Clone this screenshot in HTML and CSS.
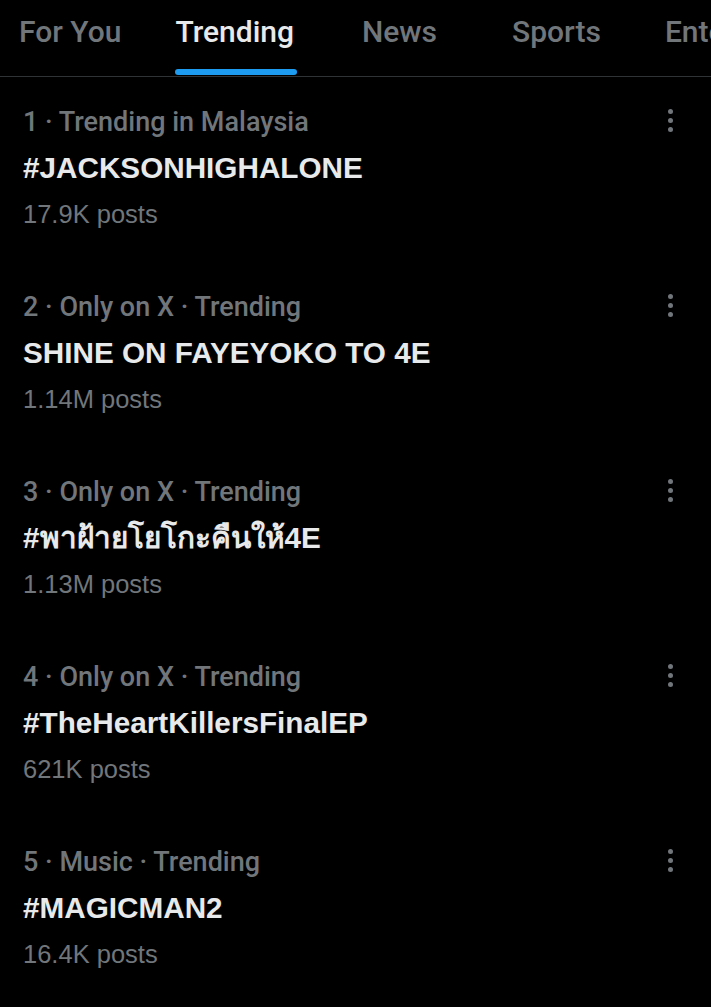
FILE: index.html
```html
<!DOCTYPE html>
<html>
<head>
<meta charset="utf-8">
<link rel="stylesheet" href="styles.css">
</head>
<body>
<div class="tabs">
  <div class="tab tab-foryou">For You</div>
  <div class="tab tab-trending active">Trending<span class="bar"></span></div>
  <div class="tab tab-news">News</div>
  <div class="tab tab-sports">Sports</div>
  <div class="tab tab-ent">Entertainment</div>
</div>
<div class="list">
  <div class="row">
    <div class="meta">1 · Trending in Malaysia</div>
    <div class="title">#JACKSONHIGHALONE</div>
    <div class="count">17.9K posts</div>
    <div class="more"><span></span><span></span><span></span></div>
  </div>
  <div class="row">
    <div class="meta">2 · Only on X · Trending</div>
    <div class="title">SHINE ON FAYEYOKO TO 4E</div>
    <div class="count">1.14M posts</div>
    <div class="more"><span></span><span></span><span></span></div>
  </div>
  <div class="row">
    <div class="meta">3 · Only on X · Trending</div>
    <div class="title">#พาฝ้ายโยโกะคืนให้4E</div>
    <div class="count">1.13M posts</div>
    <div class="more"><span></span><span></span><span></span></div>
  </div>
  <div class="row">
    <div class="meta">4 · Only on X · Trending</div>
    <div class="title">#TheHeartKillersFinalEP</div>
    <div class="count">621K posts</div>
    <div class="more"><span></span><span></span><span></span></div>
  </div>
  <div class="row">
    <div class="meta">5 · Music · Trending</div>
    <div class="title">#MAGICMAN2</div>
    <div class="count">16.4K posts</div>
    <div class="more"><span></span><span></span><span></span></div>
  </div>
</div>
</body>
</html>
```
FILE: styles.css
```css
html, body {
  margin: 0;
  padding: 0;
  background: #000;
  overflow: hidden;
}
body {
  width: 711px;
  height: 1007px;
  font-family: "Liberation Sans", Arial, sans-serif;
}
.tabs {
  display: flex;
  height: 76px;
  border-bottom: 1px solid #2f3336;
  white-space: nowrap;
  overflow: hidden;
}
.tab {
  position: relative;
  font-family: Roboto, "Noto Sans", sans-serif;
  font-weight: 500;
  font-size: 30px;
  color: #71767b;
  line-height: 64px;
  flex: none;
}
.tab-foryou { margin-left: 19px; }
.tab-trending { margin-left: 54px; color: #e7e9ea; }
.tab-news { margin-left: 68px; }
.tab-sports { margin-left: 75px; }
.tab-ent { margin-left: 64px; }
.bar {
  position: absolute;
  left: 0;
  width: 122px;
  top: 69px;
  height: 6px;
  border-radius: 3px;
  background: #1d9bf0;
}
.row {
  position: relative;
  padding: 22px 23px 25px 23px;
  height: 138px;
}
.meta {
  font-family: Roboto, "Noto Sans", sans-serif;
  font-weight: 500;
  font-size: 27px;
  line-height: 46px;
  color: #71767b;
}
.title {
  font-weight: bold;
  font-size: 29.7px;
  line-height: 46px;
  color: #e7e9ea;
  font-family: "Liberation Sans", "Noto Sans", sans-serif;
}
.count {
  font-size: 25.5px;
  line-height: 46px;
  color: #71767b;
}
.more {
  position: absolute;
  right: 38px;
  top: 32px;
  display: flex;
  flex-direction: column;
  gap: 4px;
}
.more span {
  width: 5px;
  height: 5px;
  border-radius: 50%;
  background: #71767b;
}
```
